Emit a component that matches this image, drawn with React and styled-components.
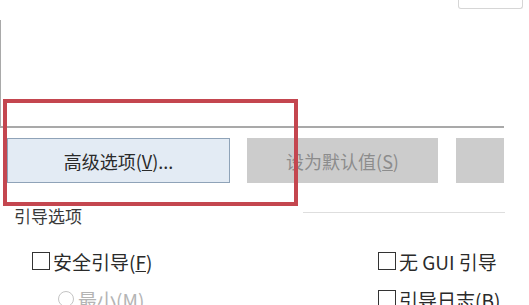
import React from "react";
import styled, { createGlobalStyle } from "styled-components";

const GlobalStyle = createGlobalStyle`
  html, body {
    margin: 0;
    padding: 0;
    background: #ffffff;
  }
  body {
    font-family: "Noto Sans CJK SC", "Noto Sans", sans-serif;
    color: #2a2a2a;
  }
`;

const Page = styled.div`
  position: relative;
  width: 529px;
  height: 305px;
  overflow: hidden;
  background: #ffffff;
`;

const TopBar = styled.div`
  display: flex;
  justify-content: flex-end;
  padding-right: 6px;
`;

const TabStub = styled.div`
  width: 63px;
  height: 8px;
  border: 1px solid #d6d6d6;
  border-top: none;
  border-radius: 0 0 3px 3px;
`;

const Panel = styled.div`
  margin-top: 11px;
  width: 503px;
  height: 106px;
  border-left: 1px solid #a9a9a9;
  border-bottom: 2px solid #a9a9a9;
`;

const ButtonRow = styled.div`
  display: flex;
  margin-top: 10px;
  padding-left: 7px;
`;

const Button = styled.div`
  box-sizing: border-box;
  display: flex;
  align-items: center;
  justify-content: center;
  width: ${(p) => p.$w}px;
  height: 45px;
  margin-left: ${(p) => p.$gap || 0}px;
  font-size: 18px;
  background: ${(p) => (p.$disabled ? "#cccccc" : "#e3ebf4")};
  border: 1px solid ${(p) => (p.$disabled ? "#cccccc" : "#8fa3b8")};
  color: ${(p) => (p.$disabled ? "#8c8c8c" : "#2a2a2a")};
`;

const Key = styled.span`
  text-decoration: underline;
`;

const GroupHeader = styled.div`
  display: flex;
  align-items: center;
  height: 20px;
  margin-top: 23px;
  padding-left: 14px;
  width: 491px;
`;

const GroupLabel = styled.span`
  font-size: 17px;
  line-height: 20px;
  color: #3a3a3a;
`;

const Rule = styled.div`
  margin-left: auto;
  width: 202px;
  height: 1px;
  margin-top: -8px;
  background: #dedede;
`;

const Options = styled.div`
  display: grid;
  grid-template-columns: 346px auto;
  row-gap: 14px;
  margin-top: 23px;
  padding-left: 32px;
`;

const Option = styled.div`
  display: flex;
  align-items: center;
  height: 24px;
  padding-left: ${(p) => p.$indent || 0}px;
  font-size: 19px;
  white-space: nowrap;
  color: ${(p) => (p.$disabled ? "#b4b4b4" : "#2a2a2a")};
`;

const Box = styled.span`
  box-sizing: border-box;
  flex: none;
  width: 18px;
  height: 18px;
  margin-right: 3px;
  border: 1.5px solid #333333;
  background: #ffffff;
`;

const Radio = styled.span`
  box-sizing: border-box;
  flex: none;
  width: 16px;
  height: 16px;
  margin-right: 4px;
  border: 1.5px solid #c4c4c4;
  border-radius: 50%;
`;

const Highlight = styled.div`
  position: absolute;
  left: 3px;
  top: 99px;
  width: 295px;
  height: 107px;
  box-sizing: border-box;
  border: 4px solid #c4464f;
  pointer-events: none;
`;

export default function App() {
  return (
    <>
      <GlobalStyle />
      <Page>
        <TopBar>
          <TabStub />
        </TopBar>
        <Panel />
        <ButtonRow>
          <Button $w={223}>
            高级选项(<Key>V</Key>)...
          </Button>
          <Button $w={191} $gap={17} $disabled>
            设为默认值(<Key>S</Key>)
          </Button>
          <Button $w={48} $gap={18} $disabled />
        </ButtonRow>
        <GroupHeader>
          <GroupLabel>引导选项</GroupLabel>
          <Rule />
        </GroupHeader>
        <Options>
          <Option>
            <Box />
            安全引导(<Key>F</Key>)
          </Option>
          <Option>
            <Box />
            无 GUI 引导
          </Option>
          <Option $indent={26} $disabled>
            <Radio />
            最小(<Key>M</Key>)
          </Option>
          <Option>
            <Box />
            引导日志(<Key>B</Key>)
          </Option>
        </Options>
        <Highlight />
      </Page>
    </>
  );
}
